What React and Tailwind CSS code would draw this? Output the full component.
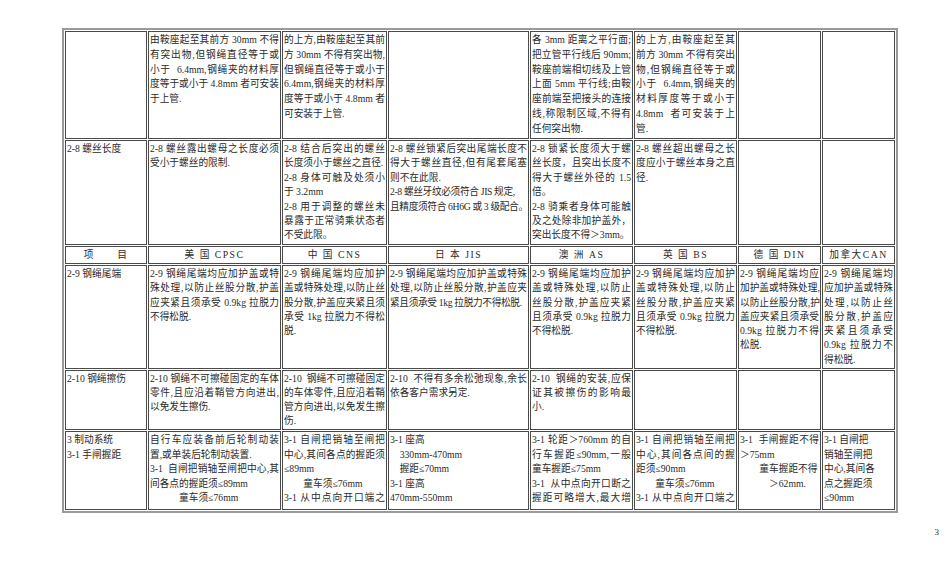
const COLS = [82, 133, 105, 141, 103, 103, 83, 73];

// each cell: lines split by \n; a line ending in "|" closes a paragraph (left aligned),
// other lines are justified edge to edge like the original Word export.
// a line starting with "~" is squeezed a little so it stays inside the cell
const rows = [
  {
    h: "h-[108px]",
    lh: "h-[14.8px] leading-[14.8px]",
    cells: [
      "",
      "由鞍座起至其前方 30mm 不得\n有突出物,但钢绳直径等于或\n小于  6.4mm,钢绳夹的材料厚\n度等于或小于 4.8mm 者可安装\n于上管.|",
      "的上方,由鞍座起至其前\n方 30mm 不得有突出物,\n但钢绳直径等于或小于\n6.4mm,钢绳夹的材料厚\n度等于或小于 4.8mm 者\n可安装于上管.|",
      "",
      "各 3mm 距离之平行面;\n把立管平行线后 90mm;\n鞍座前端相切线及上管\n上面 5mm 平行线;由鞍\n座前端至把接头的连接\n线,称限制区域,不得有\n任何突出物.|",
      "的上方,由鞍座起至其\n前方 30mm 不得有突出\n物,但钢绳直径等于或\n小于  6.4mm,钢绳夹的\n材料厚度等于或小于\n4.8mm  者可安装于上\n管.|",
      "",
      "",
    ],
  },
  {
    h: "h-[105px]",
    lh: "h-[14.4px] leading-[14.4px]",
    cells: [
      "2-8 螺丝长度|",
      "2-8 螺丝露出螺母之长度必须\n受小于螺丝的限制.|",
      "2-8 结合后突出的螺丝\n长度须小于螺丝之直径.|\n2-8 身体可触及处须小\n于 3.2mm|\n2-8 用于调整的螺丝未\n暴露于正常骑乘状态者\n不受此限。|",
      "2-8 螺丝锁紧后突出尾端长度不\n得大于螺丝直径,但有尾套尾塞\n则不在此限.|\n~2-8 螺丝牙纹必须符合 JIS 规定,|\n~且精度须符合 6H6G 或 3 级配合。|",
      "2-8 锁紧长度须大于螺\n丝长度，且突出长度不\n得大于螺丝外径的 1.5\n倍。|\n2-8 骑乘者身体可能触\n及之处除非加护盖外，\n突出长度不得＞3mm。|",
      "2-8 螺丝超出螺母之长\n度应小于螺丝本身之直\n径.|",
      "",
      "",
    ],
  },
  { header: true },
  {
    h: "h-[104px]",
    lh: "h-[14.3px] leading-[14.3px]",
    cells: [
      "2-9 钢绳尾端|",
      "2-9 钢绳尾端均应加护盖或特\n殊处理,以防止丝股分散,护盖\n应夹紧且须承受 0.9kg 拉脱力\n不得松脱.|",
      "2-9 钢绳尾端均应加护\n盖或特殊处理,以防止丝\n股分散,护盖应夹紧且须\n承受 1kg 拉脱力不得松\n脱.|",
      "2-9 钢绳尾端均应加护盖或特殊\n处理,以防止丝股分散,护盖应夹\n~紧且须承受 1kg 拉脱力不得松脱.|",
      "2-9 钢绳尾端均应加护\n盖或特殊处理,以防止\n丝股分散,护盖应夹紧\n且须承受 0.9kg 拉脱力\n不得松脱.|",
      "2-9 钢绳尾端均应加护\n盖或特殊处理,以防止\n丝股分散,护盖应夹紧\n且须承受 0.9kg 拉脱力\n不得松脱.|",
      "2-9 钢绳尾端均应\n加护盖或特殊处理,\n以防止丝股分散,护\n盖应夹紧且须承受\n0.9kg 拉脱力不得\n松脱.|",
      "2-9 钢绳尾端均\n应加护盖或特殊\n处理,以防止丝\n股分散,护盖应\n夹紧且须承受\n0.9kg 拉脱力不\n得松脱.|",
    ],
  },
  {
    h: "h-[60px]",
    lh: "h-[14px] leading-[14px]",
    cells: [
      "2-10 钢绳擦伤|",
      "2-10 钢绳不可擦碰固定的车体\n零件,且应沿着鞘管方向进出,\n以免发生擦伤.|",
      "2-10  钢绳不可擦碰固定\n的车体零件,且应沿着鞘\n管方向进出,以免发生擦\n伤.|",
      "2-10  不得有多余松弛现象,余长\n依各客户需求另定.|",
      "2-10  钢绳的安装,应保\n证其被擦伤的影响最\n小.|",
      "",
      "",
      "",
    ],
  },
  {
    h: "h-[79px]",
    lh: "h-[14.6px] leading-[14.6px]",
    cells: [
      "3 制动系统|\n3-1 手闸握距|",
      "自行车应装备前后轮制动装\n置,或单装后轮制动装置.|\n3-1  自闸把销轴至闸把中心,其\n间各点的握距须≤89mm|\n\u3000\u3000\u3000童车须≤76mm|",
      "3-1 自闸把销轴至闸把\n中心,其间各点的握距须\n≤89mm|\n\u3000\u3000童车须≤76mm|\n3-1 从中点向开口端之",
      "3-1 座高|\n\u3000330mm-470mm|\n\u3000握距≤70mm|\n3-1 座高|\n470mm-550mm|",
      "3-1 轮距＞760mm 的自\n行车握距≤90mm,一般\n童车握距≤75mm|\n3-1  从中点向开口断之\n握距可略增大,最大增",
      "3-1 自闸把销轴至闸把\n中心,其间各点间的握\n距须≤90mm|\n\u3000\u3000童车须≤76mm|\n3-1 从中点向开口端之",
      "3-1  手闸握距不得\n＞75mm|\n\u3000\u3000童车握距不得|\n\u3000\u3000\u3000＞62mm.|",
      "3-1 自闸把|\n销轴至闸把|\n中心,其间各|\n点之握距须|\n≤90mm|",
    ],
  },
];

const headers = ["项\u3000\u3000目", "美 国 CPSC", "中 国 CNS", "日 本 JIS", "澳 洲 AS", "英 国 BS", "德 国 DIN", "加拿大CAN"];

function Line({ raw, lh }) {
  let l = raw;
  const tight = l.startsWith("~");
  if (tight) l = l.slice(1);
  const end = l.endsWith("|");
  if (end) l = l.slice(0, -1);
  const t = l.replace(/ {2}/g, " \u00a0");
  return (
    <div
      className={
        lh +
        " overflow-visible " +
        (end ? "whitespace-nowrap text-left" : "whitespace-nowrap text-justify [text-align-last:justify]") +
        (tight ? " tracking-[-0.35px]" : "")
      }
    >
      {t}
    </div>
  );
}

function Cell({ text, lh }) {
  const lines = text ? text.split("\n") : [];
  return (
    <td className="align-top border border-[#4a4a4a] p-px overflow-hidden">
      {lines.map((l, i) => (
        <Line key={i} raw={l} lh={lh} />
      ))}
    </td>
  );
}

export default function App() {
  return (
    <div className="w-[950px] h-[577px] bg-white overflow-hidden text-[#2a2a2a] font-['Liberation_Serif','Noto_Sans_CJK_SC',serif] text-[9.7px]">
      <div className="pl-[62px] pt-[28px]">
        <table className="table-fixed w-[836px] border-separate border-spacing-[1px] border-2 border-[#9a9a9a]">
          <colgroup>
            {COLS.map((w, i) => (
              <col key={i} style={{ width: w }} />
            ))}
          </colgroup>
          <tbody>
            {rows.map((r, ri) =>
              r.header ? (
                <tr key={ri} className="h-[18px] leading-[14px]">
                  {headers.map((h, i) => (
                    <td
                      key={i}
                      className="border border-[#4a4a4a] text-center align-middle whitespace-pre tracking-[1.5px] p-0"
                    >
                      {h}
                    </td>
                  ))}
                </tr>
              ) : (
                <tr key={ri} className={r.h}>
                  {r.cells.map((c, ci) => (
                    <Cell key={ci} text={c} lh={r.lh} />
                  ))}
                </tr>
              )
            )}
          </tbody>
        </table>
      </div>
      <div className="mt-[14px] pr-[11px] text-right text-[9px] leading-[10px]">3</div>
    </div>
  );
}
